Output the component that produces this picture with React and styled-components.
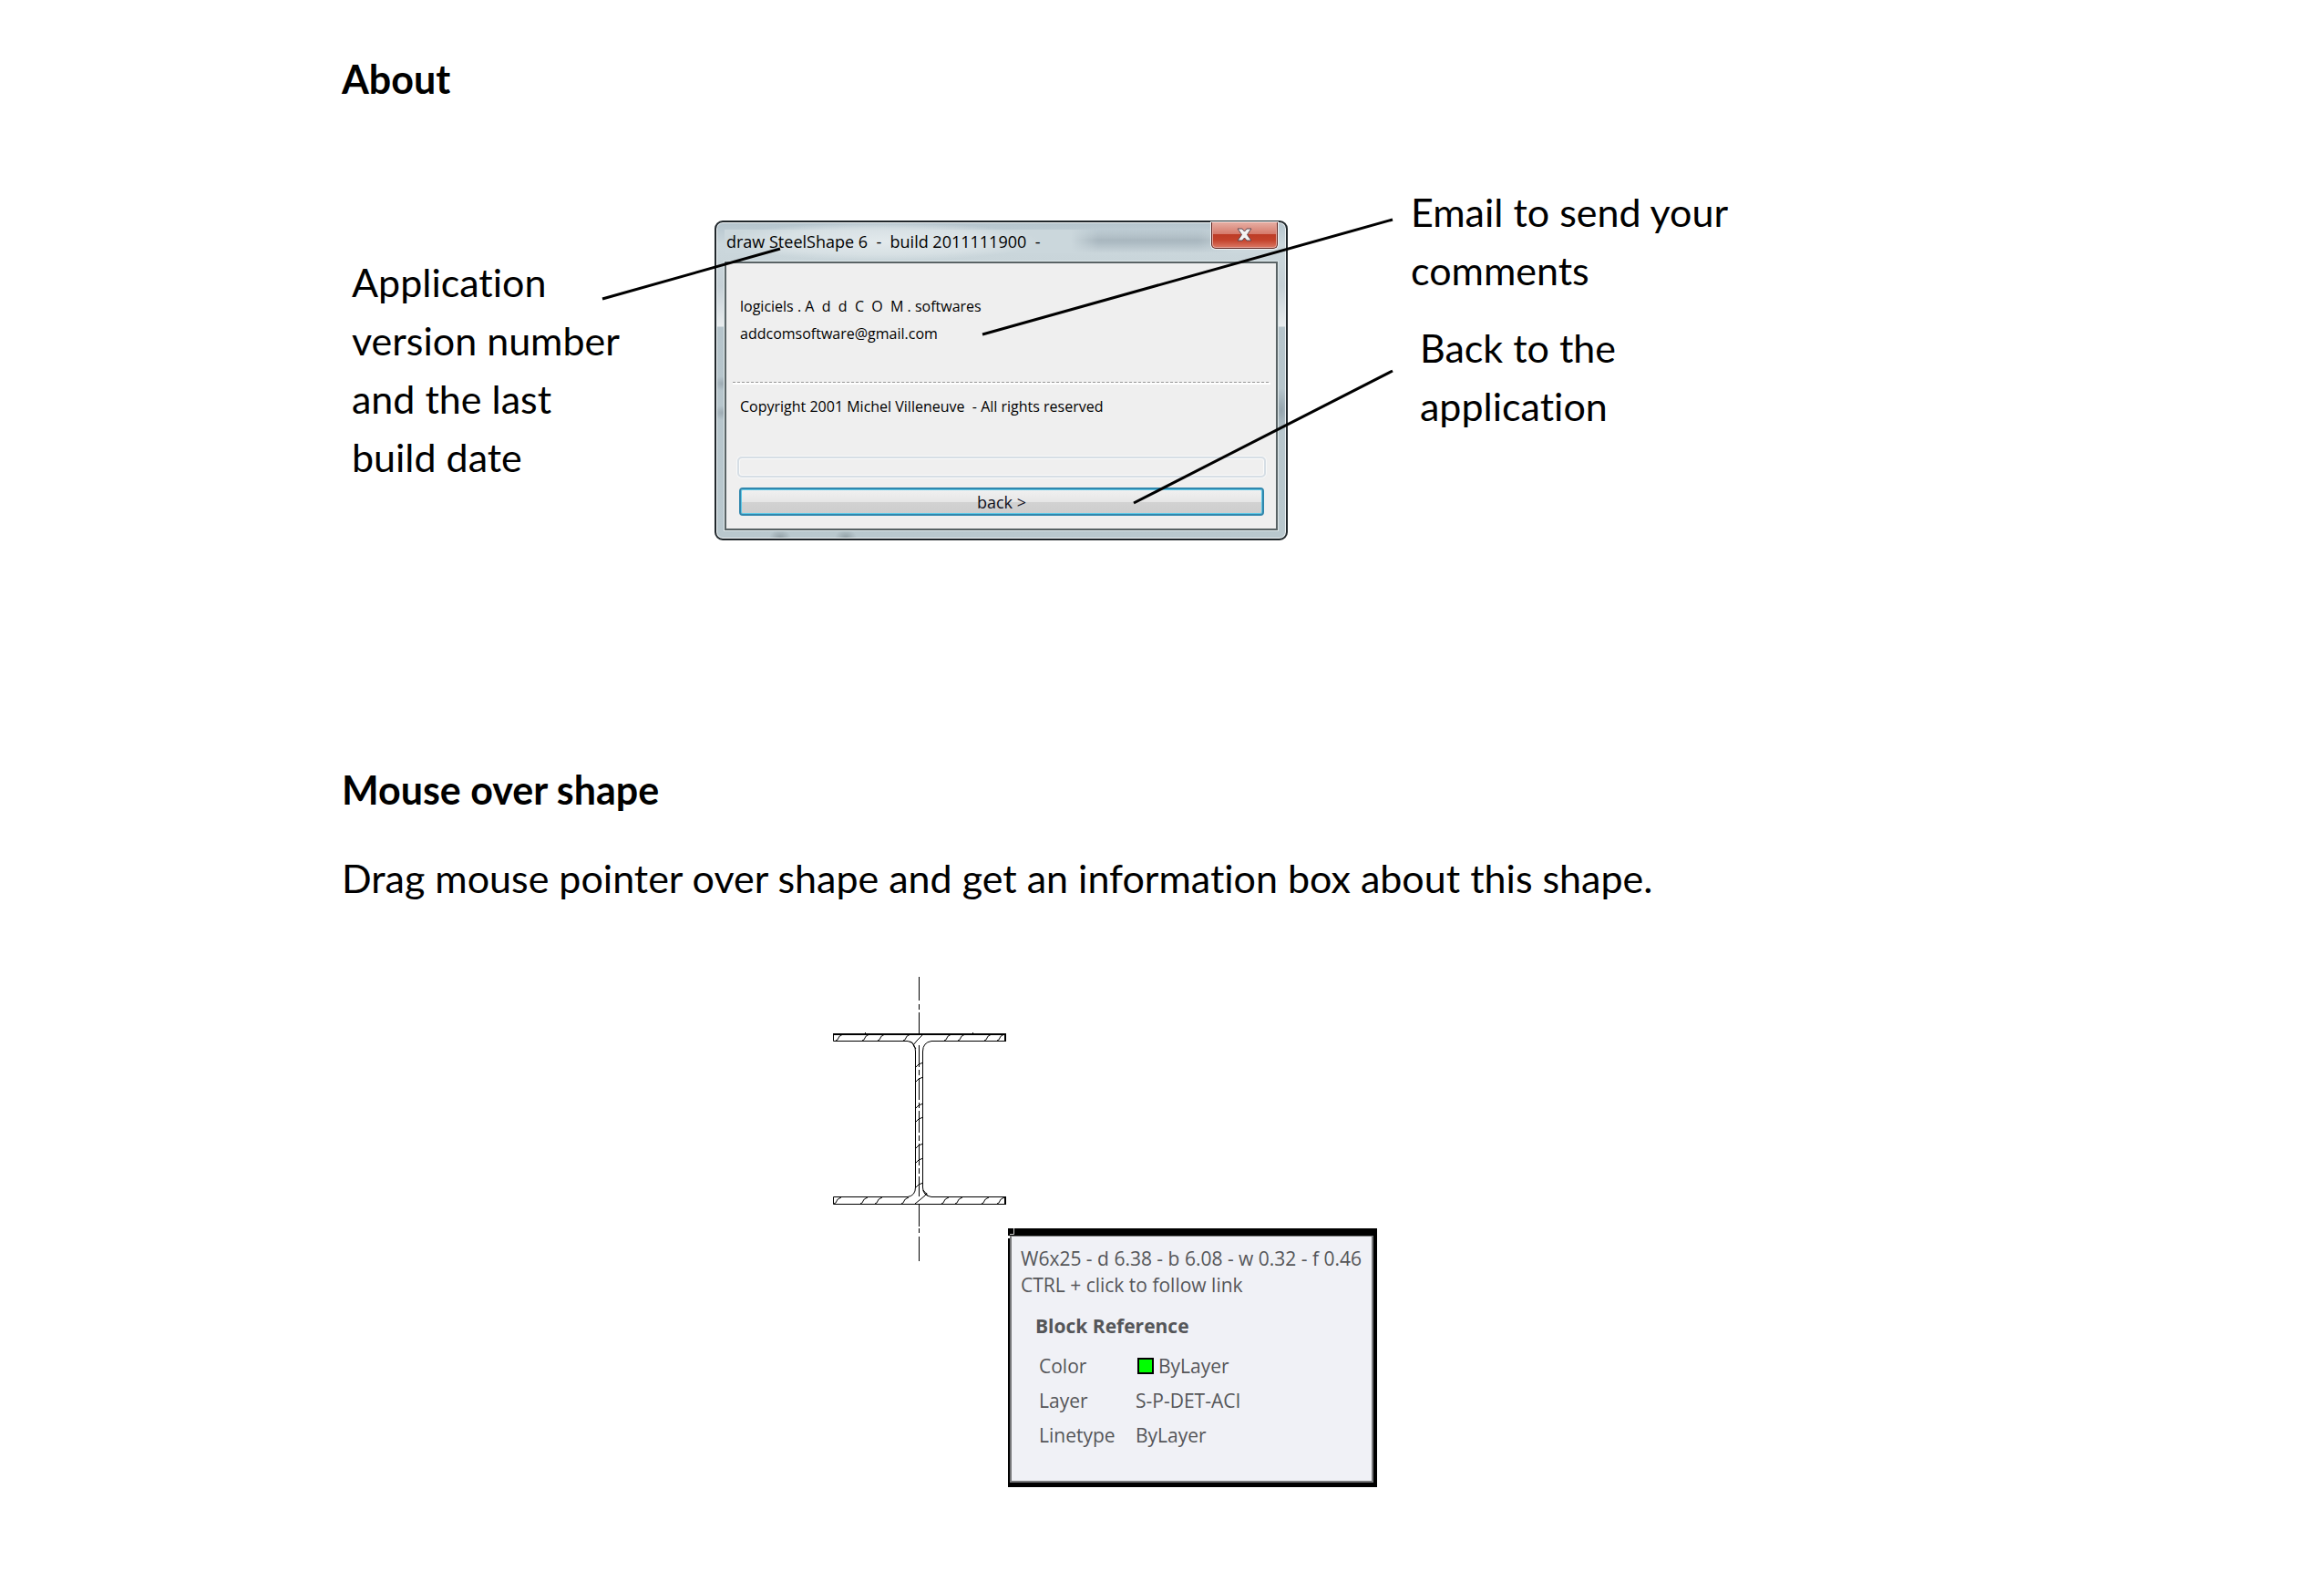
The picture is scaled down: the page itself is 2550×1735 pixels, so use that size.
import React from "react";
import styled, { createGlobalStyle } from "styled-components";

const GlobalStyle = createGlobalStyle`
  *, *::before, *::after { box-sizing: border-box; }
  body { margin: 0; background: #fff; color: #000; }
`;

const Page = styled.main`
  display: flex;
  flex-direction: column;
  padding: 55px 64px 96px 375px;
  font: 400 43px/64px Lato, sans-serif;
  font-variant-ligatures: none;
`;

const Section = styled.section`
  display: flex;
  flex-direction: column;
`;

const Heading = styled.h2`
  margin: 0;
  font-size: inherit;
  font-weight: 700;
`;

const Paragraph = styled.p`
  margin: 33px 0 0;
`;

/* About figure */

const AboutFigure = styled.figure`
  position: relative;
  display: flex;
  align-items: flex-start;
  margin: 0;
  padding: 82px 0 242px 11px;
`;

const Notes = styled.div`
  display: flex;
  flex: none;
  flex-direction: column;
  gap: 21px;
  width: ${(p) => p.$width}px;
  margin-top: ${(p) => p.$top || 0}px;
`;

const Note = styled.p`
  margin: 0;
  padding-left: ${(p) => p.$indent || 0}px;
`;

const Leaders = styled.svg`
  position: absolute;
  inset: 0;
  width: 100%;
  height: 100%;
  pointer-events: none;
  stroke: #000;
  stroke-width: 3;
`;

const Dialog = styled.div`
  display: flex;
  flex: none;
  flex-direction: column;
  width: 629px;
  margin: 41px 135px 0 100px;
  padding: 0 9px 9px;
  border: 2px solid #20272b;
  border-radius: 9px;
  box-shadow: inset 0 0 0 1px #eef3f5;
  background:
    radial-gradient(ellipse 9px 8px at 6px 177px, #9dabb3, transparent),
    radial-gradient(ellipse 9px 8px at 6px 209px, #9dabb3, transparent),
    radial-gradient(ellipse 10px 24px at 620px 206px, #94a4ad, transparent),
    radial-gradient(ellipse 12px 9px at 70px 346px, #93a1a7, transparent),
    radial-gradient(ellipse 12px 9px at 142px 346px, #93a1a7, transparent),
    linear-gradient(to bottom, #b4c4cd 0, #cbd7dc 24px, #c9d5da 43px, #c5d0d6 70px, #e8ecee 114px, #b5c4cb 115px, #b9c8ce 100%);
  font: 400 16px/30px "Open Sans", sans-serif;
`;

const TitleBar = styled.div`
  display: flex;
  align-items: flex-start;
  justify-content: space-between;
  height: 43px;
  background:
    linear-gradient(to right, #cbd7dc 380px, transparent 410px, transparent 520px, #cbd7dc 560px) 0 8px / 100% 26px no-repeat,
    linear-gradient(to bottom, transparent, #a9b7bf 45%, #adbbc3 55%, transparent) 380px 8px / 180px 26px no-repeat;
`;

const Title = styled.h3`
  margin: 0;
  padding-left: 2px;
  background: radial-gradient(ellipse closest-side, #e2e9ec 0, #dde5e8aa 70%, transparent);
  font: 400 18px/42px "Open Sans", sans-serif;
  white-space: pre;
`;

const CloseButton = styled.button`
  display: flex;
  align-items: center;
  justify-content: center;
  width: 73px;
  height: 29px;
  margin: 0;
  padding: 0 0 2px;
  border: 1px solid #5d2420;
  border-top: 0;
  border-radius: 0 0 5px 5px;
  box-shadow: 0 0 0 1px #f0f4f5, inset 0 0 0 1px #e8a79c;
  background: linear-gradient(to bottom, #e6aea3 0, #d67b6c 45%, #bd3c26 48%, #c4432c 70%, #dc7a66 100%);
`;

const Client = styled.div`
  display: flex;
  flex-direction: column;
  padding: 32px 11px 14px 12px;
  border: 2px solid #596365;
  outline: 1px solid #dde7e9;
  background: #efefef;
`;

const Line = styled.p`
  margin: 0;
  padding-left: 3px;
  white-space: pre;
`;

const MailLink = styled.a`
  color: inherit;
  text-decoration: none;
`;

const Divider = styled.hr`
  width: calc(100% + 10px);
  height: 3px;
  margin: 38px -5px 9px;
  border: 0;
  background: repeating-linear-gradient(to right, #969696 0 3px, #efefef 3px 5px) top / 100% 1px no-repeat, #fff;
`;

const StatusField = styled.div`
  height: 23px;
  margin-top: 40px;
  border: 2px solid #d6dee5;
  border-radius: 5px;
  box-shadow: inset 0 0 0 1px #fafafa, 0 0 0 1px #f7f8f8;
`;

const BackButton = styled.button`
  height: 31px;
  margin: 11px 2px 0;
  padding: 0;
  border: 2px solid #3087ad;
  border-radius: 4px;
  box-shadow: inset 0 0 0 1px #5ec8e6;
  background: linear-gradient(to bottom, #f1f1f1 0, #e6e6e6 50%, #d2d2d2 52%, #cdcdcd 100%);
  color: #10101c;
  font: 400 18px/26px "Open Sans", sans-serif;
`;

/* Shape figure */

const ShapeFigure = styled.figure`
  display: flex;
  align-items: flex-start;
  gap: 2px;
  margin: 0;
  padding: 76px 0 0 539px;
`;

const Beam = styled.svg`
  flex: none;
  width: 190px;
  height: 312px;
  fill: none;
  stroke: #000;
`;

const InfoBox = styled.aside`
  position: relative;
  flex: none;
  width: 405px;
  margin-top: 276px;
  border: solid #000;
  border-width: 8px 4px 5px 2px;
  color: #555659;
  font: 400 21px/29px "Open Sans", sans-serif;
`;

const InfoBody = styled.div`
  padding: 10px 8px 31px 10px;
  border: 2px solid #77787a;
  border-top-width: 1px;
  background: #f0f1f6;
`;

const Corner = styled.svg`
  position: absolute;
  top: -8px;
  left: -2px;
  width: 8px;
  height: 12px;
`;

const InfoLine = styled.p`
  margin: 0;
  white-space: nowrap;
`;

const InfoTitle = styled.h4`
  margin: 16px 0 10px 16px;
  font: inherit;
  font-weight: 700;
`;

const InfoTable = styled.table`
  margin-left: 20px;
  border-collapse: collapse;
`;

const Name = styled.th`
  width: 106px;
  height: 38px;
  padding: 0;
  font-weight: 400;
  text-align: left;
`;

const Value = styled.td`
  padding: 0;
`;

const Swatch = styled.span`
  display: inline-block;
  width: 18px;
  height: 18px;
  margin: 0 5px 0 2px;
  border: 2px solid #000;
  background: #00ff00;
  vertical-align: -1px;
`;

const topHatches = [3, 32, 49, 77, 122, 137, 166, 180];
const bottomHatches = [1, 30, 46, 75, 119, 134, 163, 180];
const webHatches = [96, 112, 141, 156, 185, 201, 228];

const properties = [
  { name: "Color", value: "ByLayer", swatch: true },
  { name: "Layer", value: "S-P-DET-ACI" },
  { name: "Linetype", value: "ByLayer" },
];

function AboutDialog() {
  return (
    <Dialog role="dialog" aria-labelledby="about-title">
      <TitleBar>
        <Title id="about-title">{"draw SteelShape 6  -  build 2011111900  -"}</Title>
        <CloseButton type="button" aria-label="Close">
          <svg width="17" height="15" viewBox="0 0 17 15">
            <path
              d="M1 1h5l2.500 3 2.500-3h5l-4.500 6.500 4.500 6.500h-5l-2.500-3-2.500 3h-5l4.500-6.500z"
              fill="#f3f3f3"
              stroke="#5b4650"
              strokeWidth="1"
            />
          </svg>
        </CloseButton>
      </TitleBar>
      <Client>
        <Line>{"logiciels . A  d  d  C  O  M . softwares"}</Line>
        <Line>
          <MailLink href="mailto:addcomsoftware@gmail.com">addcomsoftware@gmail.com</MailLink>
        </Line>
        <Divider />
        <Line>{"Copyright 2001 Michel Villeneuve  - All rights reserved"}</Line>
        <StatusField />
        <BackButton type="button">back &gt;</BackButton>
      </Client>
    </Dialog>
  );
}

function BeamSection() {
  return (
    <Beam viewBox="0 0 190 312" aria-hidden="true">
      <path d="M94.500 0v26M94.500 30v6M94.500 39v24M94.500 250v24M94.500 276v5M94.500 285v27" />
      <path d="M94.500 75V241" strokeDasharray="24 3 6 3" />
      <path d="M.5 63V70.500H82Q90.500 72 90.500 82V231Q90.500 240 82 241.500H.5V249.500H189V241.500H108Q98.500 240 98.500 231V82Q98.500 72 108 70.500H189V63" />
      <path d="M0 63H190M189 62V71M189 241V250" strokeWidth="2" />
      <path d="M35.500 61v2M153.500 61v2" />
      {topHatches.map((x) => (
        <path key={x} d={`M${x} 70q3-1 3-3t5-4`} />
      ))}
      {bottomHatches.map((x) => (
        <path key={x} d={`M${x} 249q3-1 3-3t5-4`} />
      ))}
      {webHatches.map((y) => (
        <path key={y} d={`M91 ${y + 3}l3-3 5-2`} />
      ))}
      <path d="M84 71q4 1 4 3t3 5M88 75l4-5 6-6M90 249l5-4 6-5 2-3M99 234l5 6" />
    </Beam>
  );
}

export default function App() {
  return (
    <>
      <GlobalStyle />
      <Page>
        <Section>
          <Heading>About</Heading>
          <AboutFigure>
            <Notes $width={298} $top={77}>
              <Note>Application version number and the last build date</Note>
            </Notes>
            <AboutDialog />
            <Notes $width={370}>
              <Note>Email to send your comments</Note>
              <Note $indent={10}>Back to the application</Note>
            </Notes>
            <Leaders aria-hidden="true">
              <path d="M286 209L481 154M703 248L1153 122M869 433L1153 288" />
            </Leaders>
          </AboutFigure>
        </Section>
        <Section>
          <Heading>Mouse over shape</Heading>
          <Paragraph>Drag mouse pointer over shape and get an information box about this shape.</Paragraph>
          <ShapeFigure>
            <BeamSection />
            <InfoBox>
              <InfoBody>
                <InfoLine>W6x25 - d 6.38 - b 6.08 - w 0.32 - f 0.46</InfoLine>
                <InfoLine>CTRL + click to follow link</InfoLine>
                <InfoTitle>Block Reference</InfoTitle>
                <InfoTable>
                  <tbody>
                    {properties.map((p) => (
                      <tr key={p.name}>
                        <Name scope="row">{p.name}</Name>
                        <Value>
                          {p.swatch && <Swatch />}
                          {p.value}
                        </Value>
                      </tr>
                    ))}
                  </tbody>
                </InfoTable>
              </InfoBody>
              <Corner viewBox="0 0 8 12" aria-hidden="true">
                <path d="M6.500 0V6.500H2" fill="none" stroke="#d0d0d0" />
                <path d="M0 8h2v3h-2z" fill="#fff" />
              </Corner>
            </InfoBox>
          </ShapeFigure>
        </Section>
      </Page>
    </>
  );
}
